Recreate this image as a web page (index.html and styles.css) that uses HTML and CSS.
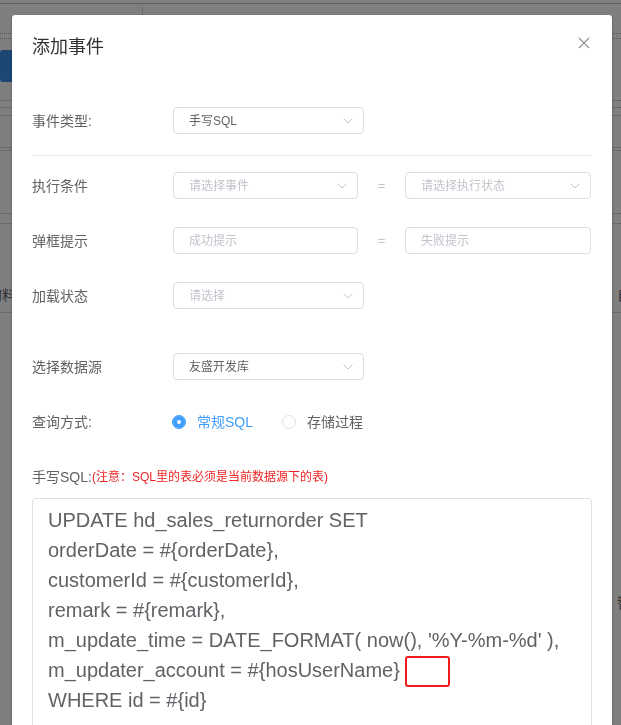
FILE: index.html
```html
<!DOCTYPE html>
<html lang="zh-CN">
<head>
  <meta charset="UTF-8" />
  <title>添加事件</title>
  <link rel="stylesheet" href="styles.css">
</head>
<body>
  <div class="page">
    <div class="page-top"></div>
    <div class="page-tab"></div>
    <div class="filter-bar"></div>
    <div class="toolbar">
      <div class="btn-primary"></div>
    </div>
    <div class="table-head"></div>
    <div class="table-row"></div>
    <div class="table-row short"></div>
    <div class="table-row dotted"></div>
    <div class="table-row dotted thin"></div>
    <div class="table-row dotted tall"></div>
    <div class="table-cells">
      <span class="cell-left">购料</span>
      <span class="cell-right">自</span>
    </div>
    <div class="table-row"></div>
    <div class="table-cells lower">
      <span class="cell-left"></span>
      <span class="cell-right">智</span>
    </div>
  </div>

  <div class="mask">
    <div class="dialog">
      <div class="dialog-header">
        <span class="dialog-title">添加事件</span>
        <button class="dialog-close" type="button">
          <svg width="12" height="12" viewBox="0 0 12 12">
            <path d="M1 1 L11 11 M11 1 L1 11" stroke="#909399" stroke-width="1.2" fill="none" />
          </svg>
        </button>
      </div>

      <div class="dialog-body">
        <div class="form-row">
          <label class="form-label">事件类型:</label>
          <div class="select">
            <span class="select-value">手写SQL</span>
            <svg class="arrow" width="10" height="6" viewBox="0 0 10 6"><path d="M0.5 0.5 L5 5 L9.5 0.5" stroke="#c0c4cc" fill="none" /></svg>
          </div>
        </div>

        <div class="divider"></div>

        <div class="form-row first">
          <label class="form-label">执行条件</label>
          <div class="select half">
            <span class="placeholder">请选择事件</span>
            <svg class="arrow" width="10" height="6" viewBox="0 0 10 6"><path d="M0.5 0.5 L5 5 L9.5 0.5" stroke="#c0c4cc" fill="none" /></svg>
          </div>
          <span class="eq">=</span>
          <div class="select half">
            <span class="placeholder">请选择执行状态</span>
            <svg class="arrow" width="10" height="6" viewBox="0 0 10 6"><path d="M0.5 0.5 L5 5 L9.5 0.5" stroke="#c0c4cc" fill="none" /></svg>
          </div>
        </div>

        <div class="form-row">
          <label class="form-label">弹框提示</label>
          <div class="input half"><span class="placeholder">成功提示</span></div>
          <span class="eq">=</span>
          <div class="input half"><span class="placeholder">失败提示</span></div>
        </div>

        <div class="form-row">
          <label class="form-label">加载状态</label>
          <div class="select">
            <span class="placeholder">请选择</span>
            <svg class="arrow" width="10" height="6" viewBox="0 0 10 6"><path d="M0.5 0.5 L5 5 L9.5 0.5" stroke="#c0c4cc" fill="none" /></svg>
          </div>
        </div>

        <div class="form-row spaced">
          <label class="form-label">选择数据源</label>
          <div class="select">
            <span class="select-value">友盛开发库</span>
            <svg class="arrow" width="10" height="6" viewBox="0 0 10 6"><path d="M0.5 0.5 L5 5 L9.5 0.5" stroke="#c0c4cc" fill="none" /></svg>
          </div>
        </div>

        <div class="form-row">
          <label class="form-label">查询方式:</label>
          <div class="radio checked">
            <span class="radio-dot"></span>
            <span class="radio-text">常规SQL</span>
          </div>
          <div class="radio">
            <span class="radio-dot"></span>
            <span class="radio-text">存储过程</span>
          </div>
        </div>

        <div class="form-row note-row">
          <span class="note-label">手写SQL:</span><span class="note-warn">(注意：SQL里的表必须是当前数据源下的表)</span>
        </div>

        <div class="sql-box">UPDATE hd_sales_returnorder SET
orderDate = #{orderDate},
customerId = #{customerId},
remark = #{remark},
m_update_time = DATE_FORMAT( now(), '%Y-%m-%d' ),
m_updater_account = #{hosUserName} <span class="mark"></span>
WHERE id = #{id}</div>
      </div>
    </div>
  </div>
</body>
</html>
```

FILE: styles.css
```css
html, body {
  margin: 0;
  height: 100%;
  overflow: hidden;
}

body {
  background-color: #fff;
  font-family: "Liberation Sans", "Noto Sans CJK SC", sans-serif;
  color: #606266;
}

/* page behind the dialog */
.page-top {
  height: 3px;
  border-bottom: 1px solid #c4c4c4;
}

.page-tab {
  width: 142px;
  height: 11px;
  border-right: 1px solid #d4d4d4;
  border-top-right-radius: 6px;
}

.filter-bar {
  margin-top: 18px;
  height: 4px;
  border-top: 1px dotted #b0b0b0;
  border-bottom: 1px dotted #b0b0b0;
}

.toolbar {
  height: 50px;
}

.btn-primary {
  margin-top: 11px;
  width: 60px;
  height: 32px;
  background-color: #3a8ee6;
  border-radius: 3px;
}

.table-head {
  height: 6px;
  border-top: 1px dotted #b0b0b0;
  border-bottom: 1px dotted #b0b0b0;
}

.table-row {
  margin-top: 7px;
  height: 31px;
  border-top: 1px solid #d4d4d4;
}

.table-row.short {
  margin-top: 0;
  height: 2px;
}

.table-row.dotted {
  margin-top: 0;
  height: 62px;
  border-top: 1px dotted #b0b0b0;
}

.table-row.thin {
  height: 9px;
}

.table-row.tall {
  height: 20px;
}

.table-cells {
  display: flex;
  justify-content: space-between;
  font-size: 14px;
  line-height: 20px;
  color: #606266;
  margin: 41px -10px 0 -12px;
}

.table-cells.lower {
  margin-top: 249px;
}

.mask {
  position: fixed;
  top: 0;
  left: 0;
  right: 0;
  bottom: 0;
  background-color: rgba(0, 0, 0, 0.5);
}

/* dialog */
.dialog {
  margin: 15px 0 0 12px;
  width: 600px;
  background-color: #fff;
  border-radius: 3px;
  box-shadow: 0 1px 3px rgba(0, 0, 0, 0.3);
}

.dialog-header {
  display: flex;
  justify-content: space-between;
  align-items: flex-start;
  padding: 20px 22px 10px 20px;
}

.dialog-title {
  font-size: 18px;
  line-height: 24px;
  color: #303133;
}

.dialog-close {
  margin-top: 2px;
  padding: 0;
  width: 12px;
  height: 12px;
  border: none;
  background: none;
  cursor: pointer;
}

.dialog-close svg {
  display: block;
}

.dialog-body {
  padding: 38px 20px 0 20px;
}

.form-row {
  display: flex;
  align-items: center;
  height: 27px;
}

.form-row + .form-row {
  margin-top: 28px;
}

.form-row.spaced {
  margin-top: 44px;
}

.form-row.first {
  margin-top: 0;
}

.form-label {
  width: 141px;
  flex-shrink: 0;
  font-size: 14px;
  line-height: 20px;
  color: #606266;
}

.divider {
  margin: 21px 0 16px;
  height: 1px;
  background-color: #ebeef5;
}

.select,
.input {
  box-sizing: border-box;
  display: flex;
  align-items: center;
  justify-content: space-between;
  width: 191px;
  height: 27px;
  padding: 0 10px 0 15px;
  border: 1px solid #dcdfe6;
  border-radius: 4px;
  font-size: 12px;
  line-height: 16px;
}

.select.half,
.input.half {
  width: 185px;
}

.select-value {
  color: #606266;
}

.placeholder {
  color: #c0c4cc;
}

.eq {
  width: 47px;
  text-align: center;
  font-size: 13px;
  color: #c0c4cc;
}

.eq + .half {
  width: 186px;
}

.radio {
  display: flex;
  align-items: center;
  margin-right: 30px;
  font-size: 14px;
  line-height: 20px;
  cursor: pointer;
}

.radio-dot {
  box-sizing: border-box;
  width: 14px;
  height: 14px;
  margin: 0 11px 0 -1px;
  border: 1px solid #dcdfe6;
  border-radius: 50%;
  background-color: #fff;
}

.radio.checked .radio-dot {
  border-color: #409eff;
  background-color: #409eff;
  box-shadow: inset 0 0 0 4px #409eff, inset 0 0 0 7px #fff;
}

.radio.checked .radio-text {
  color: #409eff;
}

.note-row {
  font-size: 14px;
  line-height: 20px;
}

.note-warn {
  font-size: 12px;
  color: #f02424;
}

.sql-box {
  box-sizing: border-box;
  margin-top: 8px;
  height: 240px;
  padding: 6px 15px 4px;
  border: 1px solid #dcdfe6;
  border-radius: 4px;
  font-family: "Liberation Sans", Arial, sans-serif;
  font-size: 20px;
  line-height: 30px;
  color: #606266;
  white-space: pre-line;
}

.mark {
  display: inline-block;
  box-sizing: border-box;
  width: 45px;
  height: 31px;
  margin: -2px 0;
  border: 2px solid #f21c1c;
  border-radius: 3px;
  vertical-align: middle;
}
```
